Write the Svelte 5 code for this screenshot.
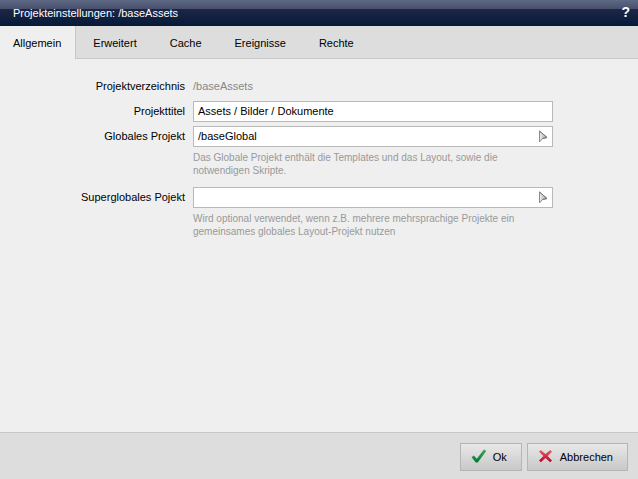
<script lang="ts">
  const tabs = ['Allgemein', 'Erweitert', 'Cache', 'Ereignisse', 'Rechte'];

  let activeTab = $state('Allgemein');
  let title = $state('Assets / Bilder / Dokumente');
  let globalProject = $state('/baseGlobal');
  let superGlobalProject = $state('');
</script>

{#snippet pickerIcon()}
  <svg viewBox="0 0 10 13" width="10" height="13" aria-hidden="true">
    <defs>
      <linearGradient id="picker-fill" x1="0" y1="0" x2="1" y2="0">
        <stop offset="0" stop-color="#f0f0f0" />
        <stop offset="1" stop-color="#a0a0a0" />
      </linearGradient>
    </defs>
    <path d="M1.5 1 L9 7.5 L4.5 8.5 L1.5 12 Z" fill="url(#picker-fill)" stroke="#8c8c8c" />
    <path d="M1.5 1 L9 7.5 L4.5 8.5" fill="none" stroke="#777" />
  </svg>
{/snippet}

<div class="dialog">
  <header class="titlebar">
    <h1>Projekteinstellungen: /baseAssets</h1>
    <button type="button" class="help" aria-label="Hilfe">?</button>
  </header>

  <nav class="tabs">
    {#each tabs as tab}
      <button type="button" class="tab" class:active={tab === activeTab} onclick={() => (activeTab = tab)}>
        {tab}
      </button>
    {/each}
  </nav>

  <form class="form">
    <div class="row">
      <span class="label">Projektverzeichnis</span>
      <span class="value">/baseAssets</span>
    </div>

    <div class="row">
      <label class="label" for="title">Projekttitel</label>
      <div class="field">
        <input id="title" type="text" bind:value={title} />
      </div>
    </div>

    <div class="row">
      <label class="label" for="global">Globales Projekt</label>
      <div class="field">
        <input id="global" type="text" bind:value={globalProject} />
        <button type="button" class="picker" aria-label="Projekt wählen">{@render pickerIcon()}</button>
      </div>
      <p class="hint">Das Globale Projekt enthält die Templates und das Layout, sowie die notwendigen Skripte.</p>
    </div>

    <div class="row">
      <label class="label" for="superglobal">Superglobales Pojekt</label>
      <div class="field">
        <input id="superglobal" type="text" bind:value={superGlobalProject} />
        <button type="button" class="picker" aria-label="Projekt wählen">{@render pickerIcon()}</button>
      </div>
      <p class="hint">Wird optional verwendet, wenn z.B. mehrere mehrsprachige Projekte ein gemeinsames globales Layout-Projekt nutzen</p>
    </div>
  </form>

  <footer class="footer">
    <button type="button" class="action">
      <svg viewBox="0 0 16 16" width="16" height="16" aria-hidden="true">
        <defs>
          <linearGradient id="check-fill" x1="0" y1="0" x2="0" y2="1">
            <stop offset="0" stop-color="#3fa45c" />
            <stop offset="1" stop-color="#007a30" />
          </linearGradient>
        </defs>
        <path d="M0.6 8.2 L2.8 6.6 L5.8 9.8 L13 0.6 L15.2 2 L6.8 13.6 L4.8 13.6 Z" fill="url(#check-fill)" />
      </svg>
      Ok
    </button>
    <button type="button" class="action">
      <svg viewBox="0 0 16 16" width="16" height="16" aria-hidden="true">
        <defs>
          <linearGradient id="cross-fill" x1="0" y1="0" x2="0" y2="1">
            <stop offset="0" stop-color="#e8606c" />
            <stop offset="1" stop-color="#b8001f" />
          </linearGradient>
        </defs>
        <path
          d="M1 2.8 L2.8 1 L7.5 5 L12.2 1 L14 2.8 L9.6 7 L14 11.4 L12.2 13.2 L7.5 9 L2.8 13.2 L1 11.4 L5.4 7 Z"
          fill="url(#cross-fill)"
        />
      </svg>
      Abbrechen
    </button>
  </footer>
</div>

<style>
  :global(body) {
    margin: 0;
    background: #efefef;
  }

  .dialog {
    display: flex;
    flex-direction: column;
    min-height: 100vh;
    font-family: 'Liberation Sans', Arial, sans-serif;
    font-size: 11px;
    line-height: 13px;
    color: #000;
  }

  button,
  input {
    font: inherit;
    color: inherit;
    margin: 0;
    box-sizing: border-box;
  }

  .titlebar {
    display: flex;
    align-items: center;
    justify-content: space-between;
    height: 26px;
    padding: 0 8px 0 13px;
    background: linear-gradient(#5e6985 0, #474f6b 9px, #1f2647 9px, #051a38 26px);
    color: #fff;
  }

  h1 {
    margin: 0;
    font-size: 11px;
    font-weight: normal;
  }

  .help {
    padding: 0;
    border: 0;
    background: none;
    font-size: 14px;
    line-height: 24px;
    font-weight: bold;
    align-self: flex-start;
  }

  .tabs {
    display: flex;
    height: 33px;
    box-sizing: border-box;
    background: #ddd;
    box-shadow: inset 0 -1px #c8c8c8;
  }

  .tab {
    padding: 1px 16px 0 17px;
    border: 0;
    background: none;
  }

  .tab:first-child {
    padding-left: 13px;
  }

  .tab.active {
    padding-right: 14px;
    border-right: 1px solid #c8c8c8;
    background: #efefef;
  }

  .form {
    display: flex;
    flex-direction: column;
    gap: 4px;
    flex: 1;
    padding: 17px 85px 16px 80px;
  }

  .row {
    display: grid;
    grid-template-columns: 105px 1fr;
    column-gap: 8px;
    align-items: center;
  }

  .label {
    text-align: right;
    white-space: nowrap;
  }

  .value {
    line-height: 21px;
    color: #888;
  }

  .field {
    display: flex;
    height: 21px;
    box-sizing: border-box;
    border: 1px solid #b9b9b9;
    background: #fff;
  }

  .field input {
    flex: 1;
    min-width: 0;
    padding: 0 4px;
    border: 0;
    outline: 0;
    background: none;
  }

  .picker {
    display: flex;
    align-items: center;
    padding: 0 4px;
    border: 0;
    background: none;
  }

  .hint {
    grid-column: 2;
    margin: 4px 0 6px;
    font-size: 10px;
    color: #999;
  }

  .footer {
    display: flex;
    justify-content: flex-end;
    gap: 5px;
    padding: 10px 10px 8px;
    border-top: 1px solid #c8c8c8;
    background: #ddd;
  }

  .action {
    display: flex;
    align-items: center;
    gap: 6px;
    height: 28px;
    padding: 0 14px 0 10px;
    border: 1px solid #b5b5b5;
    background: linear-gradient(#e8e8e8, #c8c8c8);
  }
</style>
